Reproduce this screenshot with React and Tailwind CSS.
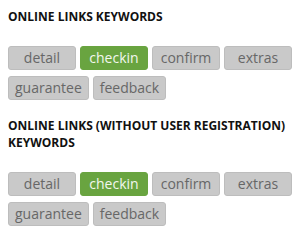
import React from 'react';

const keywords = ['detail', 'checkin', 'confirm', 'extras', 'guarantee', 'feedback'];

const KeywordGroup = ({ title, active }) => (
    <section className="mb-[9px]">
        <h4 className="text-[12px] leading-[17px] font-bold uppercase text-[#111] mt-[8px]">{title}</h4>
        <div className="flex flex-wrap gap-x-[4px] gap-y-[6px] mt-[21px] w-[290px]">
            {keywords.map(k => (
                <span
                    key={k}
                    className={`min-w-[68px] h-[24px] px-[6px] rounded-[3px] border text-center text-[14px] leading-[22px] ${
                        k === active
                            ? 'bg-[#69a440] border-[#69a440] text-[#f2f7ee]'
                            : 'bg-[#c9c9c9] border-[#bdbdbd] text-[#676767]'
                    }`}
                >
                    {k}
                </span>
            ))}
        </div>
    </section>
);

export default function App() {
    return (
        <div className="bg-white w-[303px] h-[242px] px-[8px] flex flex-col overflow-hidden font-['Open_Sans',sans-serif]">
            <KeywordGroup title="Online Links Keywords" active="checkin" />
            <KeywordGroup title="Online Links (without user registration) Keywords" active="checkin" />
        </div>
    );
}
